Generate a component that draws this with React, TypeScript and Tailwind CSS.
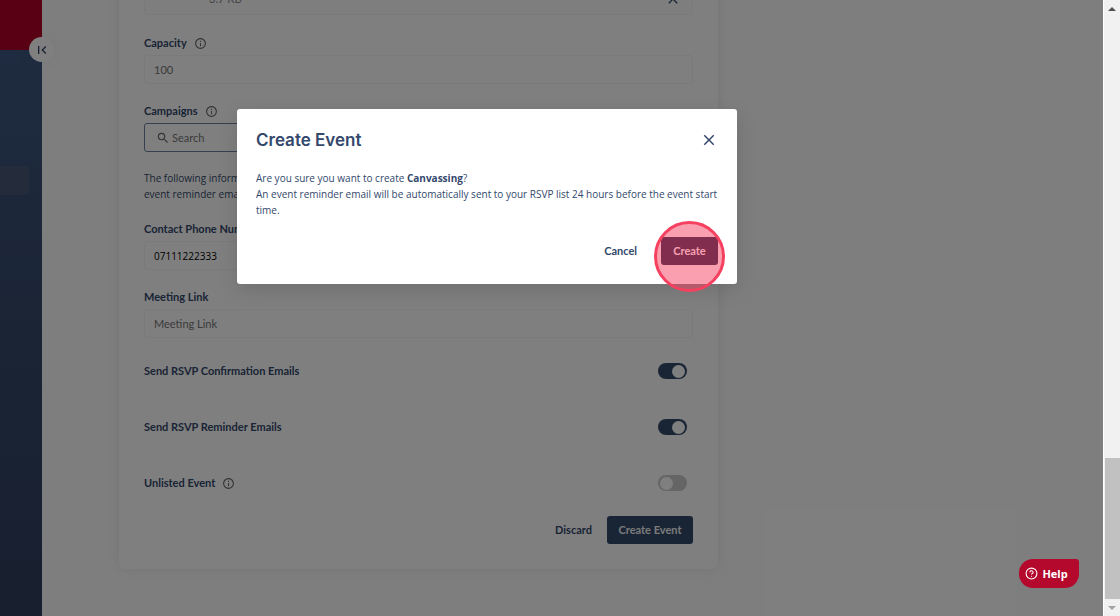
import type { ReactNode } from "react";
import { MdClose, MdFirstPage, MdInfoOutline, MdSearch } from "react-icons/md";
import { FiHelpCircle } from "react-icons/fi";

function InfoIcon() {
  return <MdInfoOutline className="size-[13px] text-[#6b6b6b]" aria-hidden="true" />;
}

type FieldProps = {
  id: string;
  label: string;
  info?: boolean;
  children: ReactNode;
};

function Field({ id, label, info, children }: FieldProps) {
  return (
    <div className="flex flex-col gap-1">
      <div className="flex h-4 items-center gap-[7px]">
        <label htmlFor={id} className="font-bold">{label}</label>
        {info && <InfoIcon />}
      </div>
      {children}
    </div>
  );
}

type ToggleProps = {
  id: string;
  label: string;
  info?: boolean;
  defaultChecked?: boolean;
};

function Toggle({ id, label, info, defaultChecked }: ToggleProps) {
  return (
    <div className="flex h-[18px] items-center justify-between pr-[6px]">
      <div className="flex items-center gap-[7px]">
        <label htmlFor={id} className="font-bold">{label}</label>
        {info && <InfoIcon />}
      </div>
      <input
        id={id}
        type="checkbox"
        role="switch"
        defaultChecked={defaultChecked}
        className="flex h-4 w-[29px] appearance-none items-center rounded-full bg-[#cbcbcb] px-[2px] before:size-[13px] before:rounded-full before:bg-white checked:justify-end checked:bg-[#33486b]"
      />
    </div>
  );
}

const inputClass =
  "h-[29px] w-full rounded-[3px] border border-[#f5f5f7] bg-white px-[9px] placeholder:text-[#757575] placeholder:opacity-100";

const bodyClass = "font-[Open_Sans,sans-serif] text-[10px] leading-4";

function Sidebar() {
  return (
    <aside className="flex w-[42px] shrink-0 flex-col bg-linear-to-b from-[#3f5a85] via-[#364a6c] to-[#303f5f]">
      <div className="relative h-[50px] shrink-0 bg-[#b4002a]">
        <button
          type="button"
          aria-label="Collapse menu"
          className="absolute -right-3 -bottom-3 flex size-[25px] items-center justify-center rounded-full bg-white shadow-[0_0_20px_rgba(0,0,0,0.06)]"
        >
          <MdFirstPage className="size-4" />
        </button>
      </div>
      <nav className="pt-[116px]">
        <a href="#events" aria-label="Events" className="mr-[13px] block h-[29px] rounded-r-sm bg-[#485878]" />
      </nav>
    </aside>
  );
}

function EventForm() {
  return (
    <form className="flex w-[599px] shrink-0 flex-col rounded-md bg-white px-[25px] pb-[25px] shadow-[0_0_14px_rgba(0,0,0,0.09)]">
      <div className="flex h-16 items-end justify-between rounded-[3px] border border-[#f5f5f7] bg-[#fdfdfd] pr-[11px] pb-[7px] pl-16">
        <span className="leading-4 text-[#8b8b8f]">3.7 KB</span>
        <button type="button" aria-label="Remove file">
          <MdClose className="size-4" />
        </button>
      </div>

      <div className="mt-5 flex flex-col gap-[19px]">
        <Field id="capacity" label="Capacity" info>
          <input id="capacity" className={inputClass} placeholder="100" />
        </Field>
        <Field id="campaigns" label="Campaigns" info>
          <div className="flex h-[29px] items-center gap-[2px] rounded-[3px] border border-[#6f80a0] px-[11px]">
            <MdSearch className="size-[14px] text-[#6b6b6b]" />
            <input id="campaigns" className="min-w-0 grow bg-transparent placeholder:text-[#757575]" placeholder="Search" />
          </div>
        </Field>
        <p className={`-mt-px ${bodyClass}`}>
          The following information
          <br />
          event reminder emails
        </p>
        <Field id="phone" label="Contact Phone Number">
          <input id="phone" type="tel" className={`${inputClass} ${bodyClass} text-black`} defaultValue="07111222333" />
        </Field>
        <Field id="meeting" label="Meeting Link">
          <input id="meeting" className={inputClass} placeholder="Meeting Link" />
        </Field>
      </div>

      <div className="mt-6 flex flex-col gap-[38px]">
        <Toggle id="confirmation" label="Send RSVP Confirmation Emails" defaultChecked />
        <Toggle id="reminder" label="Send RSVP Reminder Emails" defaultChecked />
        <Toggle id="unlisted" label="Unlisted Event" info />
      </div>

      <div className="mt-6 flex justify-end gap-[15px]">
        <button type="button" className="font-bold">Discard</button>
        <button type="button" className="h-7 w-[86px] rounded-[3px] bg-[#33486b] font-bold text-[#f4f4f4]">
          Create Event
        </button>
      </div>
    </form>
  );
}

function CreateEventDialog() {
  return (
    <div className="absolute inset-0 flex items-start justify-center bg-black/50 pt-[109px] pr-[129px]">
      <div
        role="dialog"
        aria-modal="true"
        aria-labelledby="dialog-title"
        className="w-[500px] rounded-[3px] bg-white p-[19px] shadow-[0_6px_20px_rgba(0,0,0,0.12)]"
      >
        <div className="flex h-6 items-center justify-between">
          <h2 id="dialog-title" className="font-[Inter,sans-serif] text-[17px] font-semibold">Create Event</h2>
          <button type="button" aria-label="Close">
            <MdClose className="size-[18px]" />
          </button>
        </div>
        <p className={`mt-[18px] whitespace-nowrap ${bodyClass}`}>
          Are you sure you want to create <strong className="font-bold">Canvassing</strong>?
          <br />
          An event reminder email will be automatically sent to your RSVP list 24 hours before the event start
          <br />
          time.
        </p>
        <div className="mt-[19px] flex justify-end gap-[24px]">
          <button type="button" className="font-bold">Cancel</button>
          <div className="relative">
            <button type="button" className="h-7 w-[57px] rounded-[3px] bg-[#0d1b3c] font-bold text-white">
              Create
            </button>
            <span className="pointer-events-none absolute -top-4 -left-[7px] size-[71px] rounded-full border-[3px] border-[#f6405f] bg-[#f6405f]/50" />
          </div>
        </div>
      </div>
    </div>
  );
}

function Scrollbar() {
  return (
    <div className="flex w-[17px] shrink-0 flex-col items-center border-l border-white bg-[#f1f1f1]" aria-hidden="true">
      <div className="flex h-[17px] items-center">
        <svg viewBox="0 0 8 4" className="h-1 w-2 fill-[#505050]"><path d="M4 0l4 4H0z" /></svg>
      </div>
      <div className="grow-[441]" />
      <div className="w-[15px] grow-[141] bg-[#c1c1c1]" />
      <div className="flex h-[17px] items-center">
        <svg viewBox="0 0 8 4" className="h-1 w-2 fill-[#a3a3a3]"><path d="M4 4l4-4H0z" /></svg>
      </div>
    </div>
  );
}

export default function App() {
  return (
    <div className="flex h-screen overflow-hidden bg-white font-[Lato,sans-serif] text-[11px] leading-4 text-[#33486b]">
      <div className="relative flex min-w-0 grow">
        <Sidebar />
        <main className="flex min-w-0 grow flex-col justify-end overflow-hidden bg-[#fdfdfd] pb-[47px] pl-[77px]">
          <EventForm />
        </main>
        <CreateEventDialog />
        <button
          type="button"
          className="absolute right-6 bottom-7 flex h-[29px] w-[60px] items-center justify-center gap-1 rounded-[14px] rounded-tr-[3px] bg-[#b5082d] pr-[6px] pl-px font-[Open_Sans,sans-serif] font-bold text-white"
        >
          <FiHelpCircle className="size-[13px]" />
          Help
        </button>
      </div>
      <Scrollbar />
    </div>
  );
}
